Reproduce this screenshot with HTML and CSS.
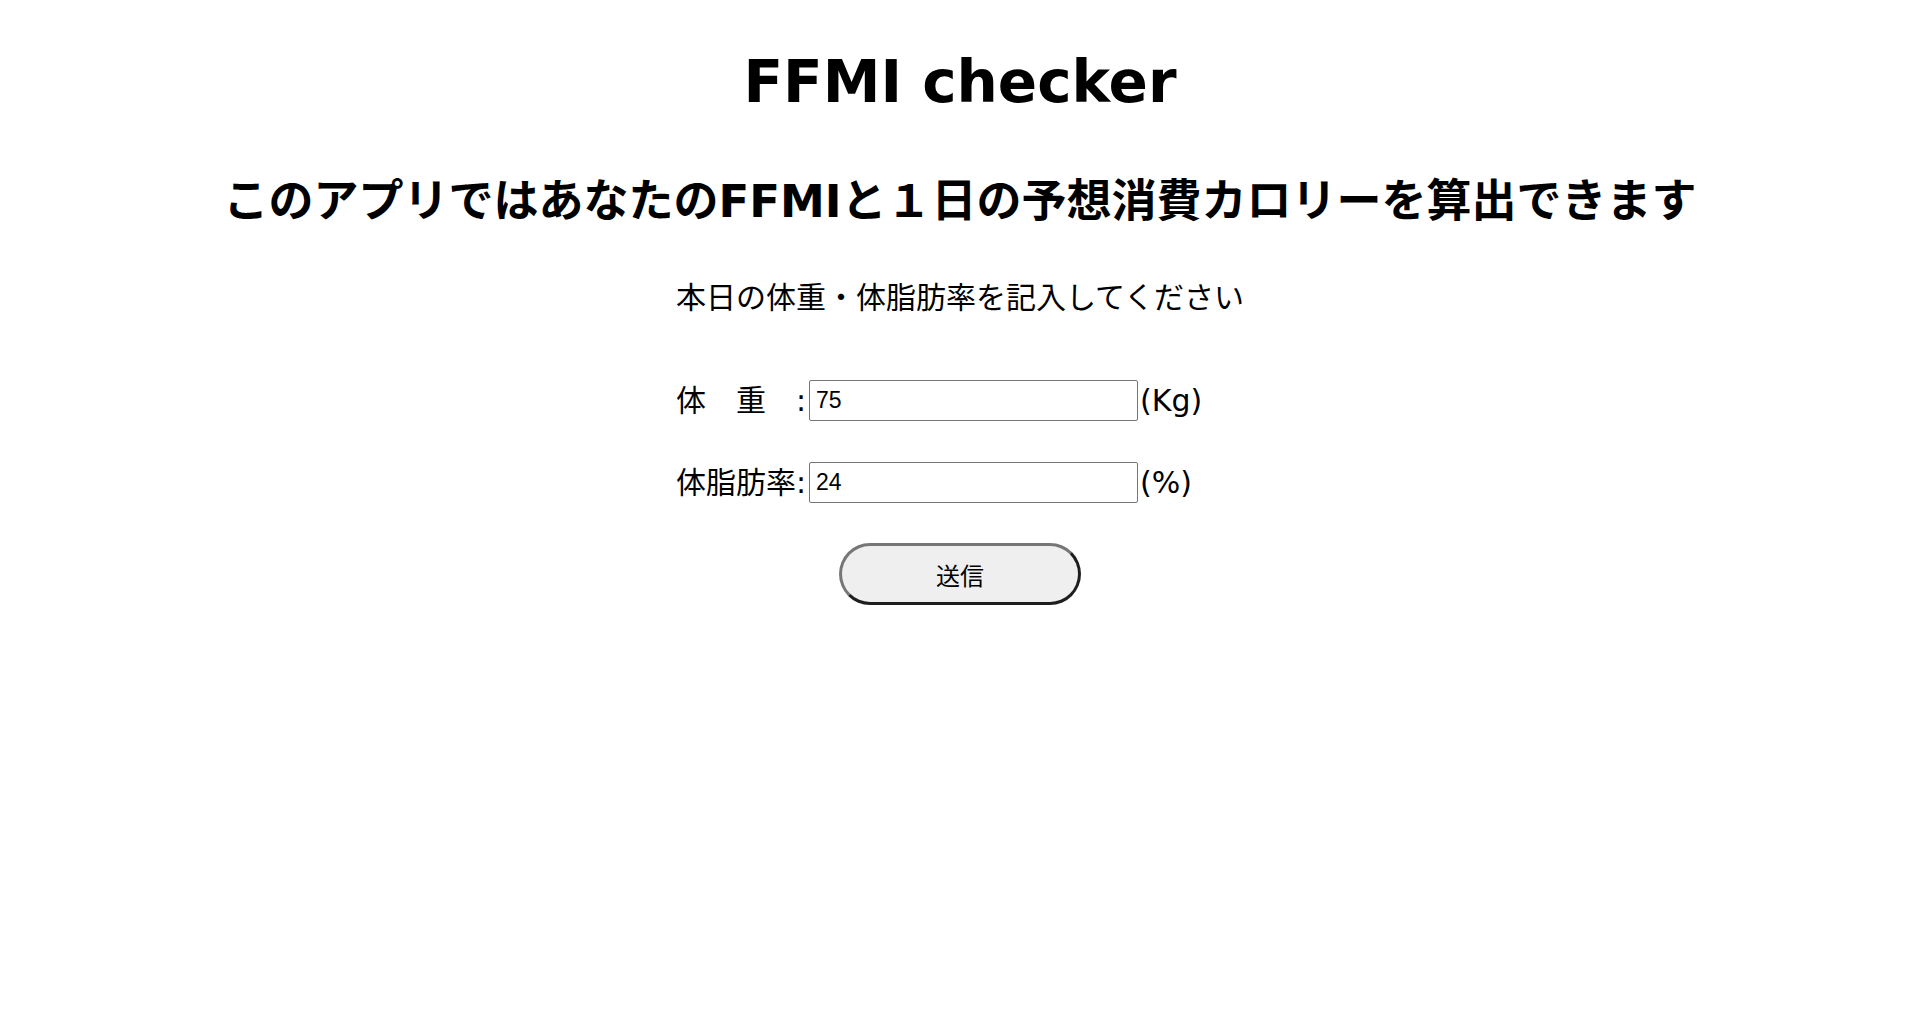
FILE: index.html
```html
<!DOCTYPE html>
<html lang="ja">
<head>
<meta charset="utf-8">
<title>FFMI checker</title>
<link rel="stylesheet" href="styles.css">
</head>
<body>
<main class="page">
  <h1 class="title">FFMI checker</h1>
  <h2 class="subtitle">このアプリではあなたのFFMIと１日の予想消費カロリーを算出できます</h2>
  <form class="form">
    <p class="lead">本日の体重・体脂肪率を記入してください</p>
    <div class="row">
      <label class="label" for="weight">体　重　:</label>
      <input class="field" id="weight" type="text" value="75">
      <span class="unit">(Kg)</span>
    </div>
    <div class="row">
      <label class="label" for="fat">体脂肪率:</label>
      <input class="field" id="fat" type="text" value="24">
      <span class="unit">(%)</span>
    </div>
    <div class="actions">
      <button class="submit" type="button">送信</button>
    </div>
  </form>
</main>
</body>
</html>
```

FILE: styles.css
```css
html, body {
  margin: 0;
  padding: 0;
  background: #ffffff;
}

body {
  font-family: "DejaVu Sans", "Noto Sans CJK JP", sans-serif;
  color: #000000;
}

.page {
  display: flex;
  flex-direction: column;
  align-items: center;
  padding-top: 40px;
}

.title {
  margin: 0;
  font-size: 58px;
  font-weight: 700;
  line-height: 84px;
}

.subtitle {
  margin: 52px 0 0;
  font-size: 45px;
  font-weight: 700;
  line-height: 52px;
}

.form {
  display: flex;
  flex-direction: column;
  align-items: center;
  margin-top: 50px;
}

.lead {
  margin: 0;
  font-size: 30px;
  line-height: 40px;
}

.row {
  display: flex;
  align-items: center;
  align-self: stretch;
  font-size: 30px;
  line-height: 41px;
}

.row:first-of-type {
  margin-top: 62px;
}

.row + .row {
  margin-top: 41px;
}

.label {
  white-space: pre;
}

.field {
  box-sizing: border-box;
  width: 329px;
  height: 41px;
  margin: 0 2px 0 3px;
  padding: 0 6px;
  border: 1px solid #767676;
  border-radius: 2px;
  font-family: "Liberation Sans", Arial, sans-serif;
  font-size: 23px;
  color: #000000;
  background: #ffffff;
}

.unit {
  font-size: 30px;
}

.actions {
  margin-top: 40px;
}

.submit {
  box-sizing: border-box;
  width: 242px;
  height: 62px;
  border-radius: 31px;
  border: 3px solid;
  border-color: #767676 #1e1e1e #1e1e1e #767676;
  background: #efefef;
  font-family: "Noto Sans CJK JP", sans-serif;
  font-size: 24px;
  color: #000000;
  padding: 0;
}
```
